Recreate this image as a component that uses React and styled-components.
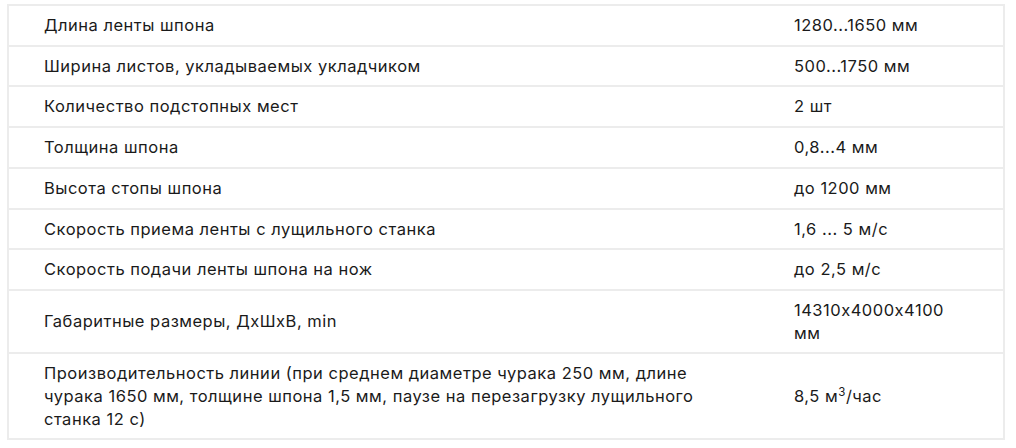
import React from 'react'
import styled, { createGlobalStyle } from 'styled-components'

const GlobalStyle = createGlobalStyle`
  body {
    margin: 0;
    background: #fff;
    font-family: Inter, "Liberation Sans", sans-serif;
    color: #1a1a1a;
  }
`

const Wrap = styled.div`
  padding: 4px 11px 0 7px;
`

const Table = styled.table`
  width: 998px;
  border-collapse: collapse;
  border: 2px solid #ececec;
  table-layout: fixed;
  font-size: 16.5px;
  letter-spacing: 0.5px;
  line-height: 22.7px;
  font-feature-settings: "calt" 0;
`

const Row = styled.tr`
  border-bottom: 2px solid #ececec;
`

const Cell = styled.td`
  padding: 8px 35px;
  vertical-align: middle;
  width: ${p => p.$w || 'auto'};
`

const Sup = styled.sup`
  font-size: 0.7em;
  line-height: 0;
`

const specs = [
  { id: 1, name: 'Длина ленты шпона', value: '1280...1650 мм' },
  { id: 2, name: 'Ширина листов, укладываемых укладчиком', value: '500...1750 мм' },
  { id: 3, name: 'Количество подстопных мест', value: '2 шт' },
  { id: 4, name: 'Толщина шпона', value: '0,8...4 мм' },
  { id: 5, name: 'Высота стопы шпона', value: 'до 1200 мм' },
  { id: 6, name: 'Скорость приема ленты с лущильного станка', value: '1,6 ... 5 м/с' },
  { id: 7, name: 'Скорость подачи ленты шпона на нож', value: 'до 2,5 м/с' },
  { id: 8, name: 'Габаритные размеры, ДхШхВ, min', value: '14310x4000x4100 мм' },
  {
    id: 9,
    name: 'Производительность линии (при среднем диаметре чурака 250 мм, длине чурака 1650 мм, толщине шпона 1,5 мм, паузе на перезагрузку лущильного станка 12 с)',
    value: <>8,5 м<Sup>3</Sup>/час</>
  }
]

export default function App () {
  return (
    <Wrap>
      <GlobalStyle />
      <Table>
        <tbody>
          {specs.map(item => (
            <Row key={item.id}>
              <Cell $w='680px'>{item.name}</Cell>
              <Cell>{item.value}</Cell>
            </Row>
          ))}
        </tbody>
      </Table>
    </Wrap>
  )
}
